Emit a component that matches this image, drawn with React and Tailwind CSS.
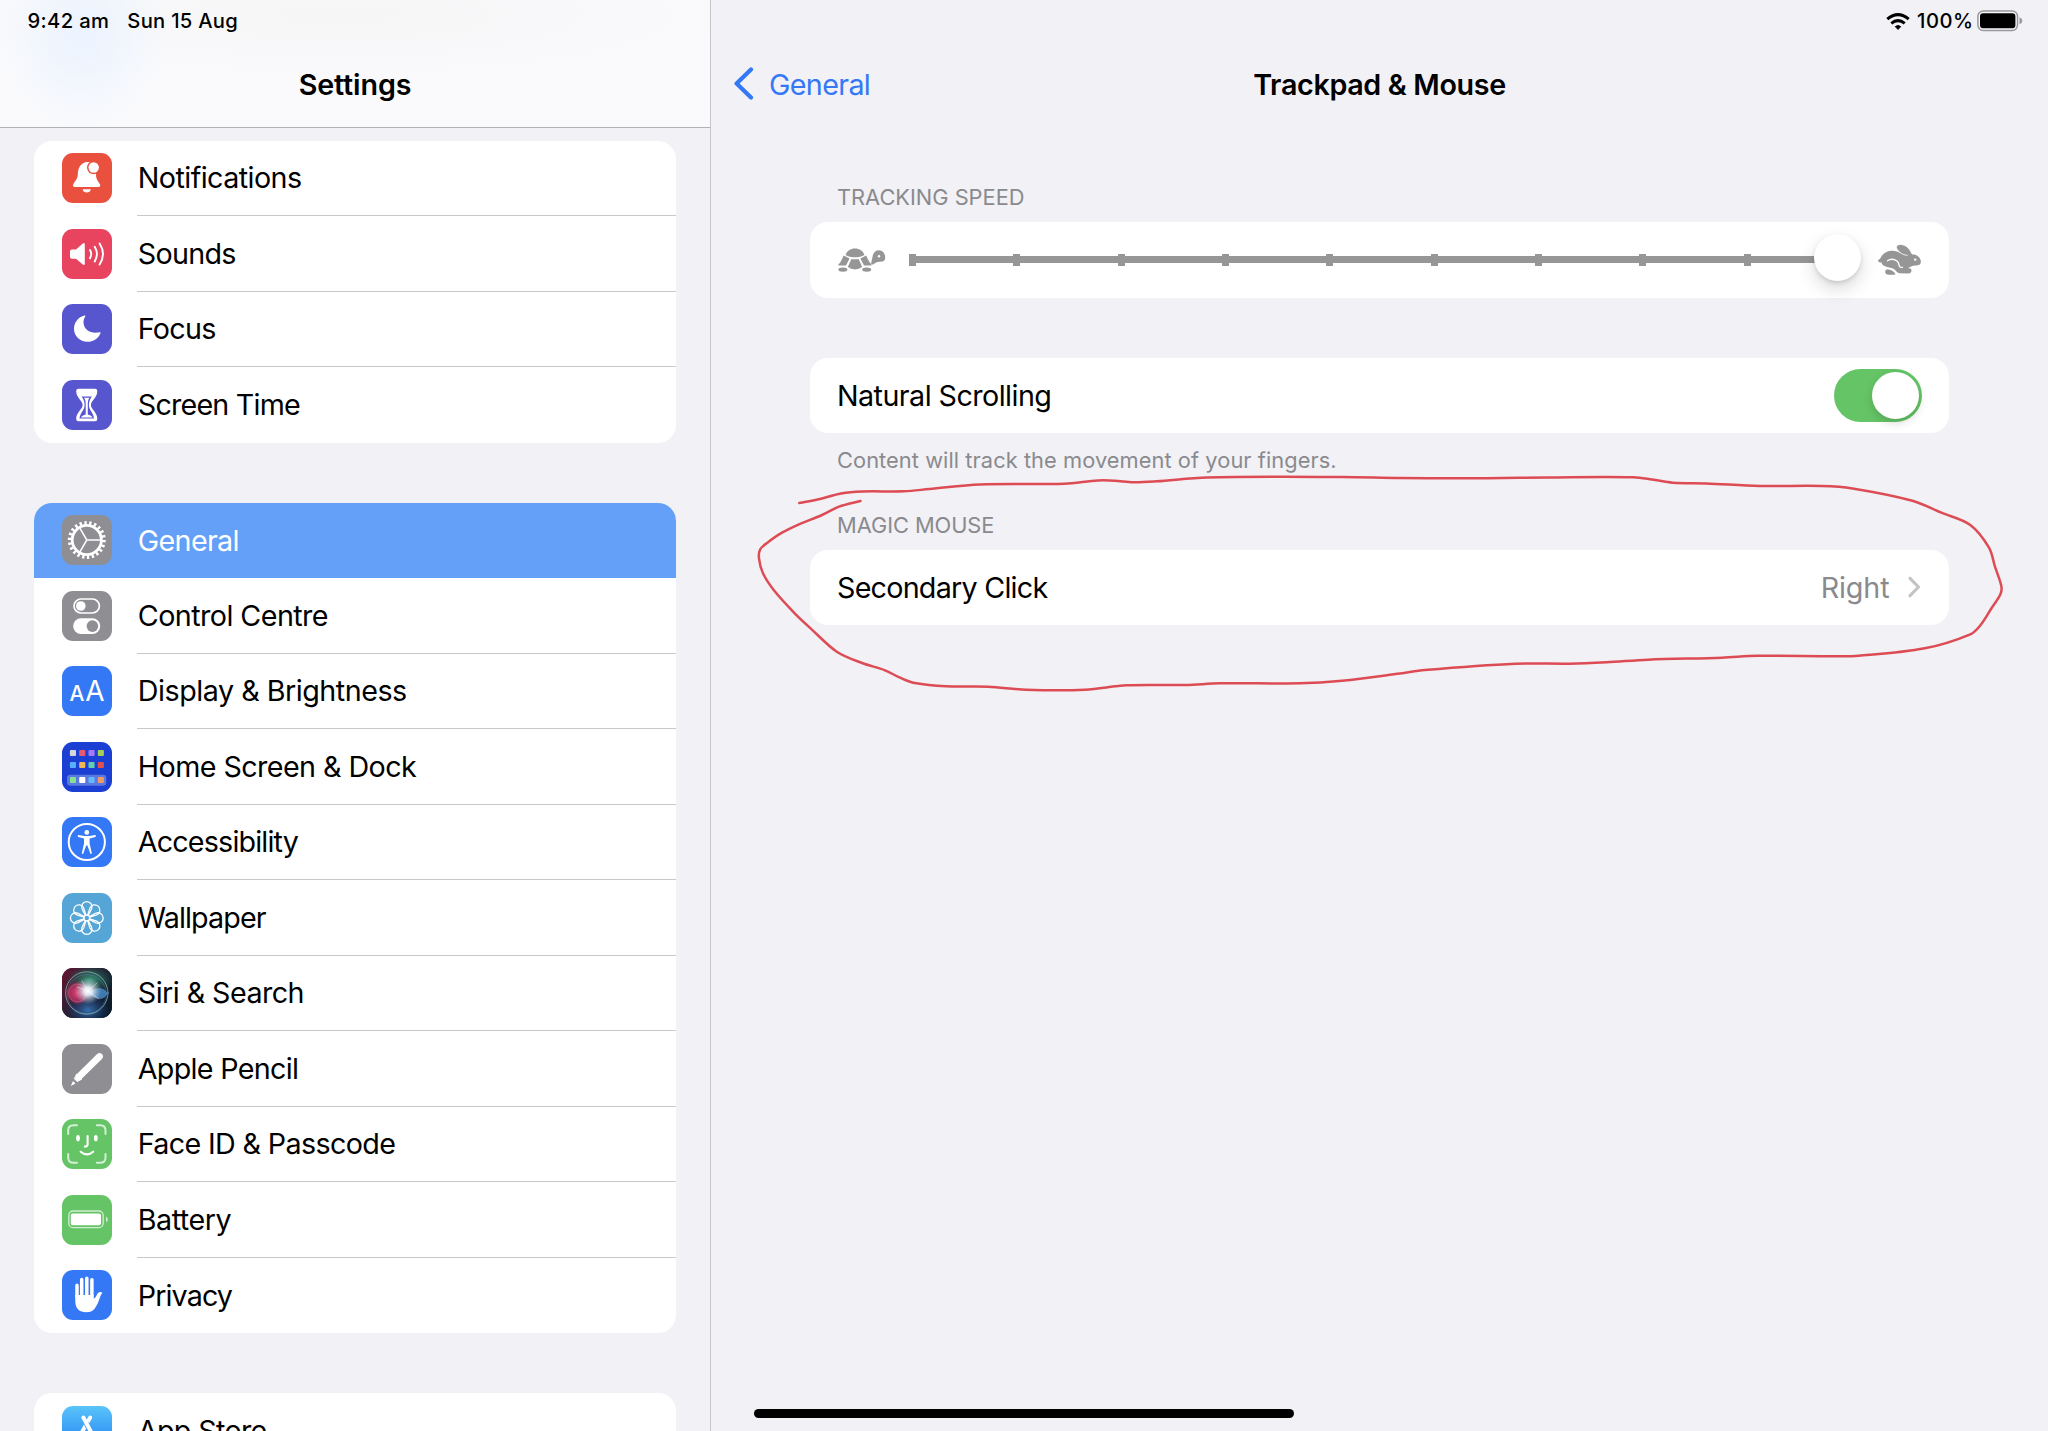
import React from 'react';

const Tile = ({ bg, children }) => (
  <span className={`block size-[50px] shrink-0 overflow-hidden rounded-[11px] ${bg}`}>
    <svg viewBox="0 0 50 50" className="block size-full" fill="none" strokeLinecap="round" strokeLinejoin="round">
      {children}
    </svg>
  </span>
);

const Bell = () => (
  <Tile bg="bg-[#e9503e]">
    <path fill="#fff" d="M25 9C17.5 10 16 16.5 15.8 21.5C15.6 27 11 29.8 11 32.6Q11 34 12.6 34H36.8Q38.3 34 38.3 32.6C38.3 29.8 34 28.5 34 21.5V14L29 8.9Z" />
    <path fill="#fff" d="M20.6 36.2H28.8C28.4 38.3 26.9 39.4 24.7 39.4S21 38.3 20.6 36.2Z" />
    <circle cx="31.7" cy="14.5" r="6.7" fill="#e9503e" />
    <circle cx="31.7" cy="14.5" r="5.2" fill="#fff" />
  </Tile>
);

const Speaker = () => (
  <Tile bg="bg-[#e8445f]">
    <path fill="#fff" d="M9.8 20.6H14L20.8 14.5Q22.8 13 22.8 15.5V34.5Q22.8 37 20.8 35.5L14 29.8H9.8Q8 29.8 8 28V22.4Q8 20.6 9.8 20.6Z" />
    <g stroke="#fff" strokeWidth="1.9">
      <path d="M28 21Q30.4 25.1 28 29.3" />
      <path d="M32.7 17.8Q37.2 25.1 32.7 32.4" />
      <path d="M37.6 14.6Q44.4 25.1 37.6 35.6" />
    </g>
  </Tile>
);

const Moon = () => (
  <Tile bg="bg-[#5856ce]">
    <path fill="#fff" d="M22.2 11.6C15.6 13.6 12 19 12 24.8C12 32.2 18 37.8 25.3 37.8C31.2 37.8 36.6 34.4 38.5 29.2Q38.8 27.9 37.5 28.2C29.5 30.2 21.6 26 21.5 18.2C21.5 16 22.1 14.2 23.3 12.4Q23.6 11.2 22.2 11.6Z" />
  </Tile>
);

const Hourglass = () => (
  <Tile bg="bg-[#5856ce]">
    <path fill="#fff" d="M16.5 8.7H33Q35.3 8.7 35.3 11C35.3 18 28.9 20.5 28.9 25S35.3 32 35.3 39Q35.3 41.3 33 41.3H16.5Q14.2 41.3 14.2 39C14.2 32 20.6 29.5 20.6 25S14.2 18 14.2 11Q14.2 8.7 16.5 8.7Z" />
    <path fill="#5856ce" d="M19.7 16.6H29.8C28.5 19 26.9 21 26.9 25C26.9 30.5 31.5 32.5 32 38.5H17.5C18 32.5 22.6 30.5 22.6 25C22.6 21 21 19 19.7 16.6Z" />
    <path fill="#fff" d="M22 17.8H27.5C26.2 19.5 25.8 21 25.8 25V34.5C27.5 35 29.5 35.8 30.6 37.4H19C20 35.8 22 35 23.7 34.5V25C23.7 21 23.3 19.5 22 17.8Z" />
  </Tile>
);

const Gear = () => (
  <Tile bg="bg-[#8e8e93]">
    <circle cx="24.8" cy="25" r="17" stroke="#fff" strokeWidth="4" strokeLinecap="butt" pathLength="44" strokeDasharray="0.95 1.05" />
    <circle cx="24.8" cy="25" r="14.6" stroke="#fff" strokeWidth="2.8" />
    <path stroke="#fff" strokeWidth="1.5" d="M24.8 25H38.5M24.8 25L17.9 13.2M24.8 25L17.9 36.8" />
  </Tile>
);

const Switches = () => (
  <Tile bg="bg-[#8e8e93]">
    <rect x="12" y="8" width="25.4" height="14" rx="7" stroke="#fff" strokeWidth="1.7" />
    <circle cx="18.8" cy="15" r="4.8" fill="#fff" />
    <rect x="11.2" y="27.3" width="27" height="15.7" rx="7.8" fill="#fff" />
    <circle cx="30.4" cy="35.1" r="5.8" fill="#8e8e93" />
  </Tile>
);

const TextSize = () => (
  <span className="flex size-[50px] shrink-0 items-baseline justify-center gap-[1px] rounded-[11px] bg-[#3478f6] text-white">
    <span className="text-[21px] font-medium leading-none">A</span>
    <span className="text-[28px] font-normal leading-[50px]">A</span>
  </span>
);

const HomeGrid = () => (
  <Tile bg="bg-[#1b3fd3]">
    <rect x="5" y="32.7" width="39.3" height="11" rx="3.2" fill="#5a78e0" />
    {[
      [8, '#d5d5dc', '#e8596e', '#a879f5', '#a9cf52'],
      [20, '#55b0f8', '#f2b755', '#62cdb0', '#e4504a'],
      [35.1, '#86e08e', '#ffffff', '#62b8fb', '#ef9a66'],
    ].map(([y, ...colors]) =>
      colors.map((c, i) => <rect key={c} x={7.9 + i * 9.3} y={y} width="6.1" height="6" rx="1" fill={c} />)
    )}
  </Tile>
);

const Access = () => (
  <Tile bg="bg-[#3478f6]">
    <circle cx="24.8" cy="25" r="18.1" stroke="#fff" strokeWidth="2" />
    <circle cx="24.8" cy="15.4" r="2.4" fill="#fff" />
    <path fill="#fff" d="M16.2 18L22.5 19H27.1L33.4 18Q34.6 19 33.4 20L27.6 21.4V26.5L29.8 36Q29.6 37.2 28.4 36.8L25.4 28.5H24.2L21.2 36.8Q20 37.2 19.8 36L22 26.5V21.4L16.2 20Q15 19 16.2 18Z" />
  </Tile>
);

const Flower = () => (
  <Tile bg="bg-[#55a5d7]">
    <g stroke="#fff" strokeWidth="1.3">
      {[0, 45, 90, 135, 180, 225, 270, 315].map((a) => (
        <path key={a} transform={`rotate(${a} 24.8 25)`} d="M23.4 22.4L20 15.8A5.2 5.2 0 1 1 29.6 15.8L26.2 22.4" />
      ))}
      <circle cx="24.8" cy="25" r="2.9" />
    </g>
  </Tile>
);

const Siri = () => (
  <Tile bg="bg-[#15182c]">
    <defs>
      <linearGradient id="siriBase" x1="0" y1="0" x2="1" y2=".6">
        <stop offset="0" stopColor="#6a1230" />
        <stop offset=".45" stopColor="#2c2035" />
        <stop offset="1" stopColor="#0c1c2b" />
      </linearGradient>
      <radialGradient id="siriRed"><stop offset="0" stopColor="#e8437c" /><stop offset=".7" stopColor="#c83262" stopOpacity=".7" /><stop offset="1" stopColor="#c02555" stopOpacity="0" /></radialGradient>
      <radialGradient id="siriBlue"><stop offset="0" stopColor="#3f8bd5" /><stop offset="1" stopColor="#1c4a9a" stopOpacity="0" /></radialGradient>
      <radialGradient id="siriGreen"><stop offset="0" stopColor="#3b9a78" /><stop offset="1" stopColor="#1c6a58" stopOpacity="0" /></radialGradient>
      <radialGradient id="siriGlow"><stop offset="0" stopColor="#fff" /><stop offset=".3" stopColor="#f0f8ff" stopOpacity=".9" /><stop offset="1" stopColor="#a8b8c8" stopOpacity="0" /></radialGradient>
    </defs>
    <rect width="50" height="50" fill="url(#siriBase)" />
    <ellipse cx="28" cy="12" rx="24" ry="15" fill="url(#siriGreen)" />
    <ellipse cx="26" cy="42" rx="22" ry="16" fill="url(#siriBlue)" opacity=".75" />
    <circle cx="24.8" cy="25" r="21.2" stroke="#8fbdb8" strokeWidth="1" opacity=".75" />
    <circle cx="24.8" cy="26" r="19.5" stroke="#5f9ad0" strokeWidth=".6" opacity=".6" />
    <circle cx="15.5" cy="25" r="12" fill="url(#siriRed)" />
    <path fill="#4f9fe8" opacity=".7" d="M27 26C31 19 43 18 45 25C44 33 33 32 27 26Z" />
    <circle cx="15.6" cy="25" r="9" stroke="#ff9fbb" strokeWidth=".6" opacity=".5" />
    <circle cx="26" cy="23" r="13.5" fill="url(#siriGlow)" />
    <path stroke="#fff" strokeWidth="1" opacity=".4" d="M26 23L35 15M26 23L15 19M26 23L37 31M26 23L20 13" />
  </Tile>
);

const Pencil = () => (
  <Tile bg="bg-[#8e8e93]">
    <path stroke="#fff" strokeWidth="6.8" d="M37.5 12.5L17.6 32.2" />
    <path fill="#fff" stroke="#fff" strokeWidth="1" d="M15 30.2L20 35L15.2 37.6L12.6 35Z" />
    <path fill="#fff" d="M11 37L13.5 39.5L8.7 41.9Z" />
  </Tile>
);

const Face = () => (
  <Tile bg="bg-[#65c466]">
    <path stroke="#fff" strokeWidth="2" opacity=".72" d="M6.2 15V11.5Q6.2 6.2 11.5 6.2H15M34.8 6.2H38.2Q43.5 6.2 43.5 11.5V15M43.5 35V38.4Q43.5 43.7 38.2 43.7H34.8M15 43.7H11.5Q6.2 43.7 6.2 38.4V35" />
    <ellipse cx="16" cy="19.2" rx="1.9" ry="3.1" fill="#fff" />
    <ellipse cx="33.8" cy="19.2" rx="1.9" ry="3.1" fill="#fff" />
    <path stroke="#fff" strokeWidth="2.1" d="M25.6 17V25.2Q25.6 27.6 22.8 27.6M18.6 32.7Q24.9 38 31.2 32.7" />
  </Tile>
);

const BatteryTile = () => (
  <Tile bg="bg-[#65c466]">
    <rect x="6.8" y="16" width="34.4" height="16.7" rx="4.4" stroke="#fff" strokeWidth="1.3" opacity=".7" />
    <rect x="8.8" y="18.4" width="30.2" height="11.9" rx="2" fill="#fff" />
    <path fill="#fff" opacity=".7" d="M44 21.5Q45.8 22.5 45.8 24.4T44 27.3Z" />
  </Tile>
);

const Hand = () => (
  <Tile bg="bg-[#3478f6]">
    <path stroke="#fff" strokeWidth="3.5" d="M15 15.2V27M19.7 9.6V26M24.8 8.2V26M29.9 9.8V27" />
    <path fill="#fff" d="M13.3 25H31.6V28.6C33.8 28.4 34.5 24.6 36 23C37.2 21.8 39 21.8 40.4 22.8C38 25.5 37.8 29.5 35.8 33.2C33 39 30.5 42.2 24.4 42.2C17.3 42.2 13.3 38.4 13.3 31.5Z" />
  </Tile>
);

const AppStore = () => (
  <Tile bg="bg-linear-to-b from-[#5ac4f9] to-[#1d72ef]">
    <path stroke="#fff" strokeWidth="3.9" d="M28.2 11.5L16 33M11 32.5H27" />
    <path stroke="#4aa0f3" strokeWidth="5.4" d="M25 18.6L34.5 37" />
    <path stroke="#fff" strokeWidth="3.9" d="M21.4 11.5L35 37M33 32.5H39" />
  </Tile>
);

const groups = [
  [
    { label: 'Notifications', icon: Bell, track: 'tracking-[-0.57px]' },
    { label: 'Sounds', icon: Speaker, track: 'tracking-[-0.72px]' },
    { label: 'Focus', icon: Moon, track: 'tracking-[-0.72px]' },
    { label: 'Screen Time', icon: Hourglass, track: 'tracking-[-0.8px]' },
  ],
  [
    { label: 'General', icon: Gear, track: 'tracking-[-0.66px]', active: true },
    { label: 'Control Centre', icon: Switches, track: 'tracking-[-0.56px]' },
    { label: 'Display & Brightness', icon: TextSize, track: 'tracking-[-0.48px]' },
    { label: 'Home Screen & Dock', icon: HomeGrid, track: 'tracking-[-0.57px]' },
    { label: 'Accessibility', icon: Access, track: 'tracking-[-0.83px]' },
    { label: 'Wallpaper', icon: Flower, track: 'tracking-[-0.88px]' },
    { label: 'Siri & Search', icon: Siri, track: 'tracking-[-0.55px]' },
    { label: 'Apple Pencil', icon: Pencil, track: 'tracking-[-0.7px]' },
    { label: 'Face ID & Passcode', icon: Face, track: 'tracking-[-0.65px]' },
    { label: 'Battery', icon: BatteryTile, track: 'tracking-[-0.5px]' },
    { label: 'Privacy', icon: Hand, track: 'tracking-[-0.9px]' },
  ],
  [{ label: 'App Store', icon: AppStore, track: 'tracking-[-0.65px]' }],
];

function Row({ item, last }) {
  const Icon = item.icon;
  const line = item.active || last ? '' : 'border-b border-[#c8c8ca]';
  return (
    <li className={`flex h-[75.5px] items-center gap-[25px] pl-[27.6px] ${item.active ? 'bg-[#64a0f8] text-white' : ''}`}>
      <Icon />
      <span className={`flex h-full flex-1 items-center whitespace-nowrap pl-[0.8px] text-[28.7px] ${item.track} ${line}`}>{item.label}</span>
    </li>
  );
}

const Turtle = () => (
  <svg viewBox="0 0 48 24" className="h-[24px] w-[48px] shrink-0" fill="#969696">
    <path d="M7.6 6.9C9 2.8 12.5 .5 17 .5S25 2.8 26.4 6.9C24 8.4 20.5 9.2 17 9.2S10 8.4 7.6 6.9Z" />
    <path d="M5.6 7.6L11.6 10.6L8 17.6H.6Q-.2 17 .6 16.2C3 14.2 4.2 11 5.6 7.6Z" />
    <path d="M13.4 10.9Q17 11.5 20.6 10.9L24.2 19Q21 21.4 17 21.4T9.8 19Z" />
    <path d="M22.4 10.6L28.2 7.6C29.6 11 31 14.2 33.4 16.2Q34 17.4 33 17.6H26Z" />
    <ellipse cx="4.9" cy="21.6" rx="4.5" ry="2.2" />
    <ellipse cx="28.7" cy="21.6" rx="4.5" ry="2.2" />
    <path d="M33.2 15L34.8 7.5C35.6 4 38.2 2.3 41 2.3C45 2.4 47.3 6 47.2 10C47.2 12.8 45 13.9 42 13.8C39 13.7 37.5 14.8 35.5 16.3Q33 17 33.2 15Z" />
    <circle cx="41" cy="8.2" r="1.2" fill="#fff" />
  </svg>
);

const Rabbit = () => (
  <svg viewBox="0 0 43 31" className="h-[31px] w-[43px] shrink-0" fill="#969696">
    <path d="M.5 15.8C2.5 15 3 13 4.2 11.3C6.5 8 11 6.3 15.5 6.8C20.5 7.3 24 10.5 28.5 11.2L34 10.2C38.5 10 42.8 13.5 42.9 17.5C43 20.8 40 21.6 36.5 21.4C33.5 21.6 31.5 23.6 28.8 24.2C31 23.8 33.8 24.5 33.5 26.8C33.2 29.3 31.5 29.6 29.5 29.5L21.5 29.2C18.5 29 18.5 26.5 15 24.6C12 23.3 8 23.2 5.5 21.5C4 20.5 3.8 19.3 3.3 18.3C1.5 19 -.8 17.3 .5 15.8Z" />
    <path d="M28.8 11.3C24 10.8 19 7 18.5 3.5C18.3 1 20.5 .3 23 .5C28.5 1 32.5 5.5 34.3 11Z" stroke="#fff" strokeWidth=".8" />
    <path d="M29.5 10.5L33.8 9.8L36 13L30 14Z" />
    <path d="M9.5 16.8C14.5 13.2 20.5 16.5 21 21C21.2 22.8 22.5 23.6 24.5 23.4" fill="none" stroke="#fff" strokeWidth="1.3" strokeLinecap="round" />
    <path d="M8.5 25.5C11.5 25 15 26.5 17.2 29.5C17.6 30.5 16.5 30.7 15.5 30.7H10.5C6.5 30.7 6.5 26.5 8.5 25.5Z" />
    <circle cx="37.2" cy="15.6" r="1.2" fill="#fff" />
  </svg>
);

const Wifi = () => (
  <svg viewBox="0 0 24 17" className="h-[17px] w-[24px]" fill="none" stroke="#000" strokeWidth="3">
    <path d="M1.3 6.2Q12 -3 22.7 6.2" />
    <path d="M5.3 10.4Q12 4.8 18.7 10.4" />
    <path d="M12 16.4L9.3 13.6Q12 11.4 14.7 13.6Z" fill="#000" strokeWidth="1" strokeLinejoin="round" />
  </svg>
);

const BatteryStatus = () => (
  <svg viewBox="0 0 46 22" className="h-[22px] w-[46px]">
    <rect x=".9" y=".9" width="39.6" height="19.6" rx="5.4" fill="#fff" fillOpacity=".5" stroke="#98989c" strokeWidth="1.5" />
    <rect x="3" y="3.2" width="35.4" height="15" rx="3" fill="#000" />
    <path d="M42.5 7.2Q45.4 8.2 45.4 10.7T42.5 14.2Z" fill="#98989c" />
  </svg>
);

const penSamples = [
  [799.3, 503], [820, 499], [841, 493.5], [862, 491.5], [904, 491.3], [929.5, 489], [980, 484.5], [1064, 483.7], [1098, 480.5], [1114.6, 480.7], [1133.5, 482.3], [1156.7, 481.3], [1207, 477.5], [1342, 477], [1400, 478], [1478.5, 478.3], [1553, 477.4], [1633.5, 477.3], [1652, 479.5], [1672.7, 482.7], [1706, 483.4], [1759.5, 486], [1821.5, 486], [1852.5, 488.4], [1912.4, 500.7], [1941.4, 512.7], [1970.3, 525], [1989, 547.7], [1995, 566.7], [2001.3, 586], [2000.5, 594], [1991, 609], [1980.6, 625], [1970.3, 634.3], [1924.8, 648.3], [1858.7, 655.8], [1834, 656.3], [1757.5, 655.8], [1722, 657.7], [1648, 659.7], [1606.6, 662.3], [1569.4, 663.7], [1515.7, 663.7], [1424.8, 670], [1400, 673.5], [1342, 680.7], [1299.8, 683.3], [1219.8, 683.3], [1186, 685], [1127, 685.3], [1085, 689.7], [1026, 689.7], [988.3, 686.7], [946, 686.3], [914.7, 683], [900, 677.7], [885, 670.3], [862, 663], [836.8, 651.7], [811.6, 629.3], [794.7, 613.3], [773.7, 590], [763, 573.3], [759, 558.3], [760.2, 549.3], [767.4, 542.7], [782, 532.7], [799, 524.3], [822, 515], [839, 506.7], [860.4, 501],
];

// Catmull-Rom spline through the pen samples; short handles keep uneven samples from overshooting.
function smooth(p) {
  let d = `M${p[0][0]} ${p[0][1]}`;
  for (let i = 0; i < p.length - 1; i++) {
    const a = p[i - 1] || p[i];
    const b = p[i];
    const c = p[i + 1];
    const e = p[i + 2] || c;
    const len = Math.hypot(c[0] - b[0], c[1] - b[1]) / 3;
    const n1 = Math.hypot(c[0] - a[0], c[1] - a[1]) || 1;
    const n2 = Math.hypot(e[0] - b[0], e[1] - b[1]) || 1;
    d += `C${b[0] + ((c[0] - a[0]) / n1) * len} ${b[1] + ((c[1] - a[1]) / n1) * len} ${c[0] - ((e[0] - b[0]) / n2) * len} ${c[1] - ((e[1] - b[1]) / n2) * len} ${c[0]} ${c[1]}`;
  }
  return d;
}

export default function App() {
  return (
    <div className="relative flex h-[1431px] w-[2048px] overflow-hidden bg-[#f1f1f6] font-['Inter',sans-serif] text-black">
      <aside className="flex h-full w-[711px] shrink-0 flex-col border-r border-[#c6c6c9]">
        <header className="flex h-[128px] shrink-0 flex-col border-b border-[#b2b2b5] bg-[#fafafc] bg-[radial-gradient(ellipse_85px_100px_at_82px_35px,#ebf3ff,transparent),radial-gradient(ellipse_420px_70px_at_340px_15px,#f6f6f7,transparent)]">
          <div className="flex h-[42px] items-center gap-[18px] pl-[27.5px] text-[20.2px] font-medium">
            <span className="tracking-[0.36px]">9:42 am</span>
            <span className="tracking-[0.28px]">Sun 15 Aug</span>
          </div>
          <h1 className="mt-[21px] text-center text-[28.7px] font-semibold leading-[44px] tracking-[-0.14px]">Settings</h1>
        </header>
        <div className="flex flex-1 flex-col gap-[60px] overflow-hidden pl-[34.4px] pt-[12.6px]">
          {groups.map((items) => (
            <ul key={items[0].label} className="w-[641.6px] shrink-0 overflow-hidden rounded-[18px] bg-white">
              {items.map((item, i) => (
                <Row key={item.label} item={item} last={i === items.length - 1} />
              ))}
            </ul>
          ))}
        </div>
      </aside>

      <main className="flex h-full flex-1 flex-col">
        <div className="flex h-[42px] shrink-0 items-center justify-end pr-[25px]">
          <Wifi />
          <span className="ml-[7px] mr-[4px] w-[56px] whitespace-nowrap text-[20.2px] font-medium tracking-[0.5px]">100%</span>
          <BatteryStatus />
        </div>
        <div className="grid h-[85px] shrink-0 grid-cols-[1fr_auto_1fr] items-center pl-[22px] pr-[22px]">
          <button className="flex items-center gap-[15px] text-left text-[28.7px] tracking-[-0.64px] text-[#3478f6]">
            <svg viewBox="0 0 21 34" className="h-[34px] w-[21px]" fill="none" stroke="currentColor" strokeWidth="4.2" strokeLinecap="round" strokeLinejoin="round">
              <path d="M18 2.5L3.6 16.5L18 30.5" />
            </svg>
            General
          </button>
          <h2 className="text-[28.7px] font-semibold tracking-[-0.34px]">Trackpad &amp; Mouse</h2>
        </div>

        <div className="ml-[99px] flex w-[1139px] flex-col pt-[54px] text-[28.7px]">
          <h3 className="h-[41px] pl-[27px] text-[21.8px] leading-[32px] text-[#8a8a8e]">TRACKING SPEED</h3>
          <div className="flex h-[75.5px] items-center rounded-[18px] bg-white pl-[28px] pr-[28px]">
            <Turtle />
            <div className="relative ml-[23px] flex h-[12px] w-[952px] items-center">
              <div className="h-[7px] w-[935px] bg-[#969696]" />
              <div className="absolute inset-y-0 left-0 flex w-[841.5px] justify-between">
                {Array.from({ length: 9 }, (_, i) => (
                  <span key={i} className="h-full w-[7px] bg-[#969696]" />
                ))}
              </div>
              <div className="absolute right-0 top-[-19.5px] size-[47px] rounded-full bg-white shadow-[0_8px_18px_rgba(0,0,0,0.15),0_2px_4px_rgba(0,0,0,0.12)]" />
            </div>
            <span className="ml-[17px]">
              <Rabbit />
            </span>
          </div>

          <div className="mt-[60px] flex h-[75.5px] items-center justify-between rounded-[18px] bg-white pl-[27px] pr-[27px]">
            <span className="tracking-[-0.55px]">Natural Scrolling</span>
            <span className="flex h-[53px] w-[88px] items-center justify-end rounded-full bg-[#65c466] pr-[3px]">
              <span className="size-[47px] rounded-full bg-white shadow-[0_4px_10px_rgba(0,0,0,0.15)]" />
            </span>
          </div>
          <p className="mt-[10.5px] pl-[27px] text-[21.8px] leading-[32px] tracking-[0.07px] text-[#8a8a8e]">Content will track the movement of your fingers.</p>

          <h3 className="mt-[33px] h-[41px] pl-[27px] text-[21.8px] leading-[32px] tracking-[-0.04px] text-[#8a8a8e]">MAGIC MOUSE</h3>
          <div className="flex h-[75.5px] items-center rounded-[18px] bg-white pl-[27px] pr-[27px]">
            <span className="flex-1 tracking-[-0.76px]">Secondary Click</span>
            <span className="tracking-[-0.1px] text-[#8a8a8e]">Right</span>
            <svg viewBox="0 0 15 22" className="ml-[17.5px] h-[22px] w-[15px]" fill="none" stroke="#c4c4c7" strokeWidth="3.2" strokeLinecap="round" strokeLinejoin="round">
              <path d="M3 2.3L11.5 11L3 19.7" />
            </svg>
          </div>
        </div>
      </main>

      <svg viewBox="0 0 2048 1431" className="pointer-events-none absolute inset-0 h-full w-full" fill="none">
        <path d={smooth(penSamples)} stroke="#dd4c54" strokeWidth="2.5" strokeLinecap="round" strokeLinejoin="round" />
      </svg>
      <div className="absolute bottom-[13px] left-1/2 h-[9px] w-[540px] -translate-x-1/2 rounded-full bg-black" />
    </div>
  );
}
